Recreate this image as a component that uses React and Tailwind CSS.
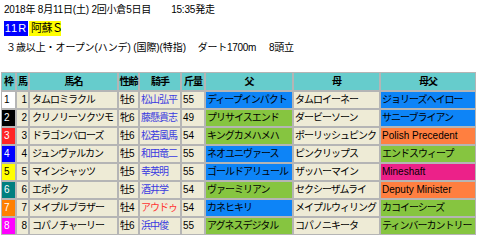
import { Fragment } from 'react';

export default function App() {
  const BLUE = 'bg-[#0d84f7]';
  const GREEN = 'bg-[#86c540]';
  const ORANGE = 'bg-[#ff7f40]';
  const PINK = 'bg-[#ec2189]';

  const waku = {
    1: 'bg-white text-black',
    2: 'bg-black text-white',
    3: 'bg-[#ff2525] text-white',
    4: 'bg-[#0000ff] text-white',
    5: 'bg-[#ffff00] text-black',
    6: 'bg-[#008080] text-white',
    7: 'bg-[#ff8000] text-white',
    8: 'bg-[#ff00ff] text-white',
  };

  const rows = [
    { n: 1, name: 'タムロミラクル', sex: '牡6', jockey: '松山弘平', w: '55', sire: 'ディープインパクト', sireC: BLUE, dam: 'タムロイーネー', bms: 'ジョリーズヘイロー', bmsC: BLUE },
    { n: 2, name: 'クリノリーソクツモ', sex: '牝6', jockey: '藤懸貴志', w: '49', sire: 'プリサイスエンド', sireC: GREEN, dam: 'ダービーソーン', bms: 'サニーブライアン', bmsC: BLUE },
    { n: 3, name: 'ドラゴンバローズ', sex: '牡6', jockey: '松若風馬', w: '54', sire: 'キングカメハメハ', sireC: GREEN, dam: 'ポーリッシュピンク', bms: 'Polish Precedent', bmsC: ORANGE, latin: true },
    { n: 4, name: 'ジュンヴァルカン', sex: '牡5', jockey: '和田竜二', w: '55', sire: 'ネオユニヴァース', sireC: BLUE, dam: 'ピンクリップス', bms: 'エンドスウィープ', bmsC: GREEN },
    { n: 5, name: 'マインシャッツ', sex: '牡5', jockey: '幸英明', w: '55', sire: 'ゴールドアリュール', sireC: BLUE, dam: 'ザッハーマイン', bms: 'Mineshaft', bmsC: PINK, latin: true },
    { n: 6, name: 'エポック', sex: '牡5', jockey: '酒井学', w: '54', sire: 'ヴァーミリアン', sireC: GREEN, dam: 'セクシーザムライ', bms: 'Deputy Minister', bmsC: ORANGE, latin: true },
    { n: 7, name: 'メイプルブラザー', sex: '牡4', jockey: 'アウドゥ', w: '54', sire: 'カネヒキリ', sireC: BLUE, dam: 'メイプルウィリング', bms: 'カコイーシーズ', bmsC: GREEN, red: true },
    { n: 8, name: 'コパノチャーリー', sex: '牡6', jockey: '浜中俊', w: '55', sire: 'アグネスデジタル', sireC: GREEN, dam: 'コパノニキータ', bms: 'ティンバーカントリー', bmsC: GREEN },
  ];

  const beige = 'bg-[#eeebd6]';
  const cell = 'h-4 leading-4 overflow-hidden whitespace-nowrap';
  const jp = 'tracking-[-1px]';
  const head = 'h-[17px] leading-[17px] bg-[#66cccc] text-center font-bold tracking-[-1px]';

  return (
    <div className="w-[479px] h-[240px] bg-white text-black text-[10px] font-['Liberation_Sans','Noto_Sans_CJK_JP',sans-serif]">
      <div className="flex pt-[3px] pl-1 leading-[14px] whitespace-nowrap">
        <span className="tracking-[-0.2px]">2018年 8月11日(土) 2回小倉5日目</span>
        <span className="ml-[20px] tracking-[-0.2px]">15:35発走</span>
      </div>
      <div className="flex mt-1 ml-1 h-[15px] text-[11px] leading-[15px] whitespace-nowrap">
        <span className="w-6 bg-[#0000ff] text-white text-center tracking-[1px]">11R</span>
        <span className="ml-px w-8 bg-[#ffff00] pl-0.5 tracking-[-0.5px] overflow-hidden">阿蘇Ｓ</span>
      </div>
      <div className="flex mt-[5px] pl-1.5 leading-[14px] whitespace-nowrap">
        <span className="tracking-[-0.1px]">３歳以上・オープン(ハンデ) (国際)(特指)</span>
        <span className="ml-[12px] tracking-[-0.3px]">ダート1700m</span>
        <span className="ml-[13px] tracking-[-0.3px]">8頭立</span>
      </div>
      <div className="mt-[17px] ml-px w-[475px] grid grid-cols-[13px_11px_87px_19px_40px_22px_86px_85px_94px] gap-[2px] p-px bg-[#b5b5b5]">
        <div className={head}>枠</div>
        <div className={head}>馬</div>
        <div className={head}>馬名</div>
        <div className={head}>性齢</div>
        <div className={head}>騎手</div>
        <div className={head}>斤量</div>
        <div className={head}>父</div>
        <div className={head}>母</div>
        <div className={head}>母父</div>
        {rows.map((r) => (
          <Fragment key={r.n}>
            <div className={`${cell} ${waku[r.n]} pl-[2px]`}>{r.n}</div>
            <div className={`${cell} ${beige} text-right pr-px`}>{r.n}</div>
            <div className={`${cell} ${beige} ${jp} pl-0.5`}>{r.name}</div>
            <div className={`${cell} ${beige} ${jp} pl-px`}>{r.sex}</div>
            <div className={`${cell} ${beige} ${jp} pl-px ${r.red ? 'text-[#ff3434]' : 'text-[#3a3ae0]'}`}>{r.jockey}</div>
            <div className={`${cell} ${beige} pl-px`}>{r.w}</div>
            <div className={`${cell} ${r.sireC} ${jp} pl-px`}>{r.sire}</div>
            <div className={`${cell} ${beige} ${jp} pl-px`}>{r.dam}</div>
            <div className={`${cell} ${r.bmsC} ${r.latin ? '' : jp} pl-px`}>{r.bms}</div>
          </Fragment>
        ))}
      </div>
    </div>
  );
}
